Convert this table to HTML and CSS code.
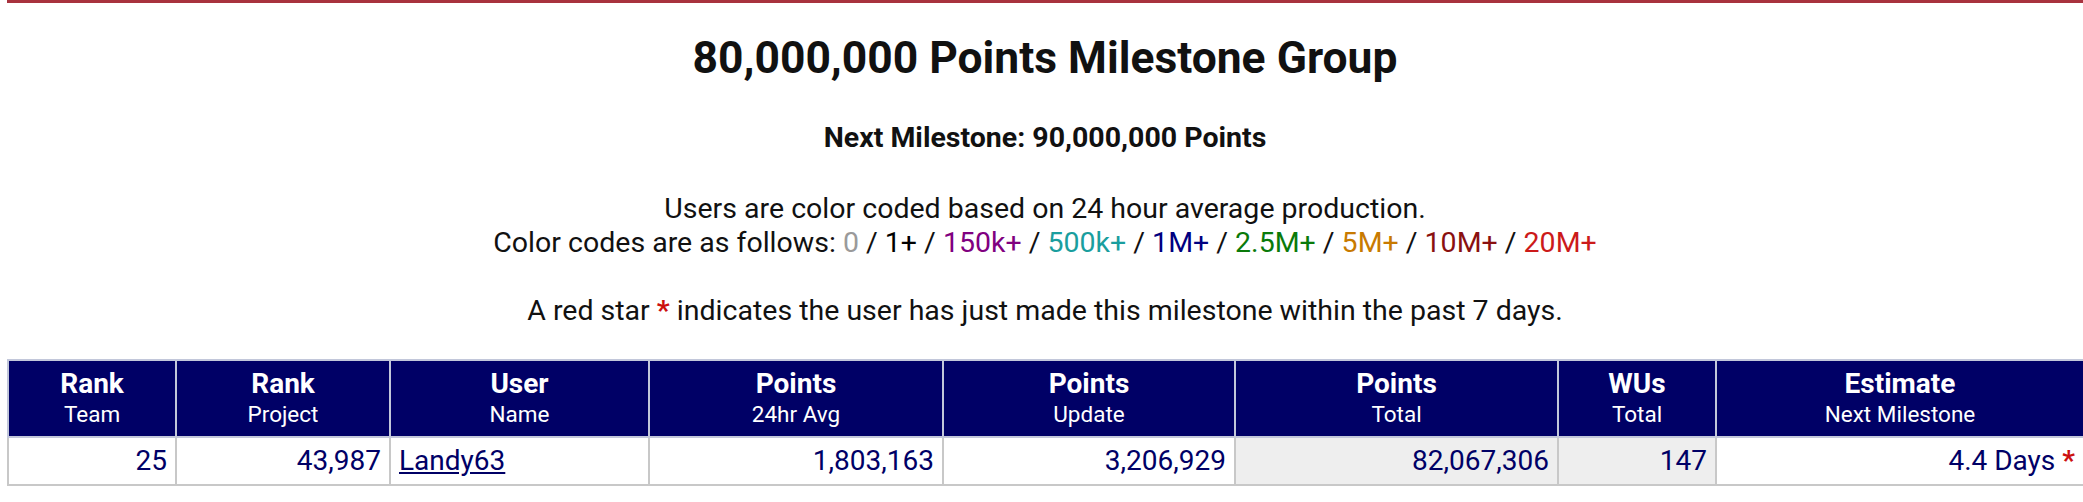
FILE: index.html
```html
<!DOCTYPE html>
<html lang="en">
<head>
<meta charset="utf-8">
<title>80,000,000 Points Milestone Group</title>
<link rel="stylesheet" href="styles.css">
</head>
<body>
<div class="page">
  <div class="frame"></div>
  <h1 class="title">80,000,000 Points Milestone Group</h1>
  <h2 class="next">Next Milestone: 90,000,000 Points</h2>
  <p class="legend">Users are color coded based on 24 hour average production.<br>Color codes are as follows: <span class="c0">0</span> / <span class="c1">1+</span> / <span class="c150k">150k+</span> / <span class="c500k">500k+</span> / <span class="c1m">1M+</span> / <span class="c25m">2.5M+</span> / <span class="c5m">5M+</span> / <span class="c10m">10M+</span> / <span class="c20m">20M+</span></p>
  <p class="note">A red star <span class="star">*</span> indicates the user has just made this milestone within the past 7 days.</p>
  <table class="stats">
    <colgroup>
      <col class="w-rank-team">
      <col class="w-rank-proj">
      <col class="w-user">
      <col class="w-avg">
      <col class="w-update">
      <col class="w-total">
      <col class="w-wus">
      <col class="w-est">
    </colgroup>
    <thead>
      <tr>
        <th><span class="th-main">Rank</span><span class="th-sub">Team</span></th>
        <th><span class="th-main">Rank</span><span class="th-sub">Project</span></th>
        <th><span class="th-main">User</span><span class="th-sub">Name</span></th>
        <th><span class="th-main">Points</span><span class="th-sub">24hr Avg</span></th>
        <th><span class="th-main">Points</span><span class="th-sub">Update</span></th>
        <th><span class="th-main">Points</span><span class="th-sub">Total</span></th>
        <th><span class="th-main">WUs</span><span class="th-sub">Total</span></th>
        <th><span class="th-main">Estimate</span><span class="th-sub">Next Milestone</span></th>
      </tr>
    </thead>
    <tbody>
      <tr>
        <td>25</td>
        <td>43,987</td>
        <td class="left"><a href="#" class="user">Landy63</a></td>
        <td>1,803,163</td>
        <td>3,206,929</td>
        <td class="grey">82,067,306</td>
        <td class="grey">147</td>
        <td>4.4 Days <span class="star">*</span></td>
      </tr>
    </tbody>
  </table>
</div>
</body>
</html>
```
FILE: styles.css
```css
html, body {
  margin: 0;
  padding: 0;
  background: #ffffff;
  overflow: hidden;
}

.page {
  width: 2076px;
  margin: 0 7px;
  font-family: Roboto, "Liberation Sans", Arial, sans-serif;
  color: #111111;
}

.frame {
  height: 0;
  border: 3px solid #a8323e;
  border-top: 0;
  border-left-width: 2px;
  border-right-width: 2px;
}

.title {
  margin: 30px 0 0;
  font-size: 44.4px;
  font-weight: 700;
  line-height: 51px;
  text-align: center;
}

.next {
  margin: 37px 0 0;
  font-size: 28.5px;
  font-weight: 700;
  line-height: 34px;
  text-align: center;
}

.legend,
.note {
  margin: 37px 0 0;
  font-size: 28.5px;
  font-weight: 400;
  line-height: 34px;
  text-align: center;
}

.note {
  margin-top: 34px;
}

.c0 { color: #9a9a9a; }
.c1 { color: #000000; }
.c150k { color: #800080; }
.c500k { color: #1a9e9e; }
.c1m { color: #000080; }
.c25m { color: #0a7a0a; }
.c5m { color: #c87a00; }
.c10m { color: #8a1010; }
.c20m { color: #cc1a1a; }

.star {
  color: #cc1010;
  font-weight: 700;
}

.stats {
  margin-top: 31px;
  width: 2076px;
  border-collapse: collapse;
  table-layout: fixed;
}

.w-rank-team { width: 168px; }
.w-rank-proj { width: 214px; }
.w-user { width: 259px; }
.w-avg { width: 294px; }
.w-update { width: 292px; }
.w-total { width: 323px; }
.w-wus { width: 158px; }
.w-est { width: 368px; }

.stats th {
  background: #000066;
  color: #ffffff;
  border: 2px solid #c2c7da;
  padding: 6px 8px 9px;
  text-align: center;
  vertical-align: middle;
}

.th-main {
  display: block;
  font-size: 28px;
  font-weight: 700;
  line-height: 34px;
}

.th-sub {
  display: block;
  font-size: 22.5px;
  font-weight: 400;
  line-height: 26px;
}

.stats td {
  border: 2px solid #c8c8c8;
  padding: 6px 8px 7px;
  font-size: 28px;
  line-height: 33px;
  color: #000066;
  text-align: right;
  white-space: nowrap;
}

.stats td.left {
  text-align: left;
}

.stats td.grey {
  background: #eeeeee;
}

.user {
  color: #000066;
  text-decoration: underline;
}
```
